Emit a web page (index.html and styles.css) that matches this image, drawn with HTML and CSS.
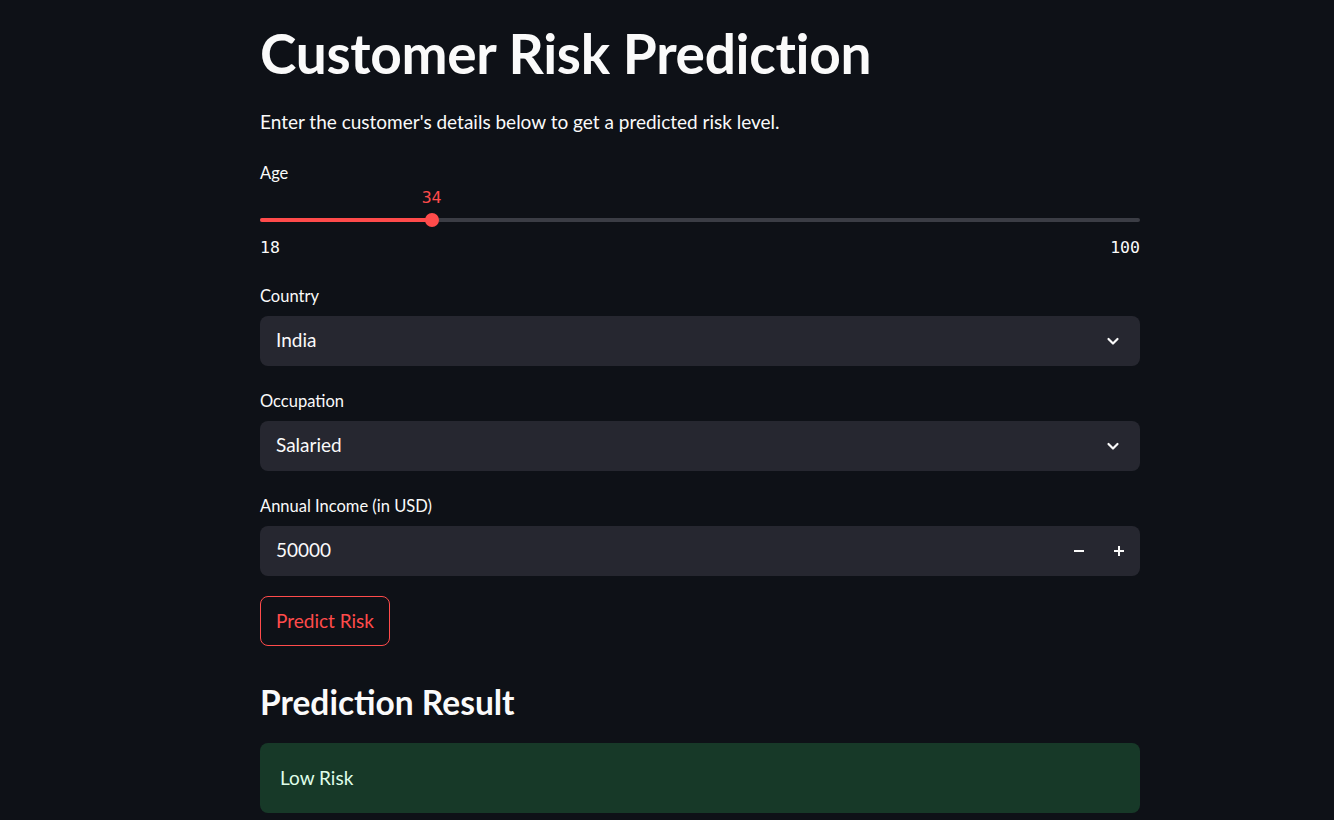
FILE: index.html
```html
<!DOCTYPE html>
<html>
<head>
<meta charset="utf-8">
<link rel="stylesheet" href="styles.css">
</head>
<body>
<main class="main">
  <h1 class="title">Customer Risk Prediction</h1>
  <p class="lead">Enter the customer's details below to get a predicted risk level.</p>

  <section class="field slider-field">
    <div class="label">Age</div>
    <div class="slider">
      <div class="slider-value" style="left: 19.5%">34</div>
      <div class="track">
        <div class="fill" style="width: 19.5%"></div>
        <div class="thumb" style="left: 19.5%"></div>
      </div>
    </div>
    <div class="ticks"><span>18</span><span>100</span></div>
  </section>

  <section class="field after-slider">
    <div class="label">Country</div>
    <div class="box">
      <span class="box-text">India</span>
      <svg class="chev" width="16" height="16" viewBox="0 0 16 16"><path d="M3.5 6 L8 10.5 L12.5 6" fill="none" stroke="#fafafa" stroke-width="2.2" stroke-linecap="round" stroke-linejoin="round"/></svg>
    </div>
  </section>

  <section class="field">
    <div class="label">Occupation</div>
    <div class="box">
      <span class="box-text">Salaried</span>
      <svg class="chev" width="16" height="16" viewBox="0 0 16 16"><path d="M3.5 6 L8 10.5 L12.5 6" fill="none" stroke="#fafafa" stroke-width="2.2" stroke-linecap="round" stroke-linejoin="round"/></svg>
    </div>
  </section>

  <section class="field">
    <div class="label">Annual Income (in USD)</div>
    <div class="box">
      <span class="box-text">50000</span>
      <div class="steppers">
        <svg width="14" height="14" viewBox="0 0 14 14"><path d="M2 7 H12" stroke="#fafafa" stroke-width="2"/></svg>
        <svg width="14" height="14" viewBox="0 0 14 14"><path d="M2 7 H12 M7 2 V12" stroke="#fafafa" stroke-width="2"/></svg>
      </div>
    </div>
  </section>

  <button class="btn">Predict Risk</button>

  <h3 class="subhead">Prediction Result</h3>
  <div class="alert">Low Risk</div>
</main>
</body>
</html>
```
FILE: styles.css
```css
* { box-sizing: border-box; }
html, body {
  margin: 0;
  padding: 0;
  background: #0e1117;
  color: #fafafa;
  font-family: "Lato", "Open Sans", sans-serif;
  height: 820px;
  overflow: hidden;
}
.main {
  width: 880px;
  margin-left: 260px;
  padding-top: 21px;
  display: flex;
  flex-direction: column;
}
.title {
  margin: 0;
  font-size: 55px;
  font-weight: 700;
  line-height: 64px;
  letter-spacing: -0.3px;
}
.lead {
  margin: 24px 0 0;
  font-size: 19px;
  line-height: 26px;
}
.field { margin-top: 24px; }
.slider-field { margin-top: 27px; }
.after-slider { margin-top: 27px; }
.label {
  font-size: 16.5px;
  line-height: 22px;
}
.slider {
  position: relative;
  height: 54px;
}
.slider-value {
  position: absolute;
  top: 5px;
  transform: translateX(-50%);
  color: #ff4b4b;
  font-family: "DejaVu Sans Mono", "Liberation Mono", monospace;
  font-size: 16.5px;
  line-height: 18px;
}
.track {
  position: absolute;
  left: 0; right: 0;
  top: 34px;
  height: 4px;
  border-radius: 2px;
  background: #3b3d45;
}
.fill {
  height: 4px;
  border-radius: 2px;
  background: #ff4b4b;
}
.thumb {
  position: absolute;
  top: -5px;
  width: 14px;
  height: 14px;
  margin-left: -7px;
  border-radius: 50%;
  background: #ff4b4b;
}
.ticks {
  display: flex;
  justify-content: space-between;
  font-family: "DejaVu Sans Mono", "Liberation Mono", monospace;
  font-size: 16.5px;
  line-height: 20px;
}
.box {
  margin-top: 9px;
  height: 50px;
  background: #262730;
  border-radius: 8px;
  display: flex;
  align-items: center;
  padding: 0 18px 0 16px;
}
.box-text {
  flex: 1;
  font-size: 19px;
  line-height: 24px;
  margin-top: -2px;
}
.chev { margin-right: 1px; }
.steppers {
  display: flex;
  gap: 26px;
  margin-right: -4px;
}
.btn {
  align-self: flex-start;
  margin-top: 20px;
  height: 50px;
  padding: 0 15px 2px;
  background: transparent;
  border: 1px solid #ff4b4b;
  border-radius: 8px;
  color: #ff4b4b;
  font-family: inherit;
  font-size: 19px;
}
.subhead {
  margin: 35px 0 0;
  font-size: 33.5px;
  line-height: 42px;
  font-weight: 700;
}
.alert {
  margin-top: 20px;
  height: 70px;
  border-radius: 8px;
  background: #173928;
  color: #dffde9;
  font-size: 19px;
  display: flex;
  align-items: center;
  padding: 0 20px 2px;
}
```
